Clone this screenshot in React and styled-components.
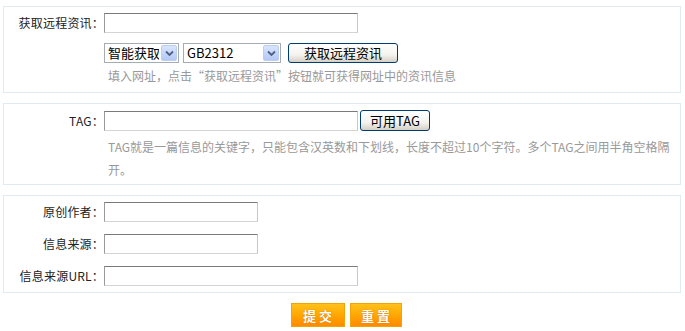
import React from 'react'
import styled, {createGlobalStyle} from 'styled-components'

const Global = createGlobalStyle`
  body {
    margin: 0;
    background: #fff;
    font-family: "Noto Sans CJK SC", "Liberation Sans", sans-serif;
    font-size: 12px;
    color: #333;
  }
`

const Page = styled.div`
  padding: 6px 4px 4px 3px;
`

const Panel = styled.div`
  border: 1px solid #e1eaee;
  padding: ${({pad}) => pad || '6px 0 6px 0'};
  margin-bottom: 10px;
  display: flex;
  flex-direction: column;
  gap: ${({gap}) => gap || '10px'};
`

const Row = styled.div`
  display: flex;
  align-items: center;
`

const Label = styled.div`
  width: 100px;
  flex: none;
  text-align: right;
  line-height: 20px;
  color: #222;
  letter-spacing: 0.2px;
`

const Field = styled.div`
  display: flex;
  align-items: center;
  gap: ${({gap}) => gap || '5px'};
  min-width: 0;
`

const Input = styled.input`
  box-sizing: border-box;
  width: ${({w}) => w}px;
  height: 20px;
  margin: 0;
  padding: 0 3px;
  border: 1px solid;
  border-color: #7a7a7a #c8c8c8 #d4d4d4 #9a9a9a;
  background: #fff;
  font: inherit;
  outline: none;
`

const SelectBox = styled.div`
  box-sizing: border-box;
  width: ${({w}) => w}px;
  height: 20px;
  display: flex;
  align-items: stretch;
  border: 1px solid #a5acb2;
  background: #fff;
  padding: 1px;
`

const NativeSelect = styled.select`
  appearance: none;
  -webkit-appearance: none;
  flex: 1;
  min-width: 0;
  border: none;
  outline: none;
  background: transparent;
  font: inherit;
  font-size: 13px;
  color: #000;
  padding: 0 2px;
  margin: 0;
  line-height: 16px;
`

const ArrowBox = styled.span`
  width: 16px;
  flex: none;
  display: flex;
  align-items: center;
  justify-content: center;
  border: 1px solid #bccdf3;
  border-radius: 2px;
  background: linear-gradient(#d9e5fd, #b3c8f5);
  box-sizing: border-box;
`

const XPButton = styled.button`
  box-sizing: border-box;
  height: ${({h}) => h || 20}px;
  padding: 0 ${({px}) => px || 14}px;
  margin: 0 0 0 ${({ml}) => ml || 0}px;
  border: 1px solid #003c74;
  border-radius: 3px;
  background: linear-gradient(#ffffff 0%, #f4f3ee 60%, #d6d0c5 100%);
  font: inherit;
  font-size: 13px;
  color: #000;
  line-height: 16px;
  cursor: pointer;
`

const Hint = styled.div`
  color: #999;
  line-height: ${({lh}) => lh || 20}px;
  margin-top: ${({mt}) => mt || 0}px;
  padding-left: 104px;
  padding-right: 6px;
`

const Actions = styled.div`
  display: flex;
  justify-content: center;
  gap: 5px;
  padding-left: 8px;
  margin-top: 1px;
`

const OrangeButton = styled.button`
  box-sizing: border-box;
  width: ${({w}) => w}px;
  height: 24px;
  border: 1px solid #f5a300;
  background: linear-gradient(#ffc21a 0%, #ffa400 55%, #ff8a00 100%);
  color: #fff;
  font: inherit;
  font-size: 13px;
  font-weight: bold;
  letter-spacing: 3px;
  text-indent: 3px;
  text-shadow: 0 0 1px #b35a00;
  margin: 0;
  cursor: pointer;
`

const Chevron = () => (
  <svg width="9" height="7" viewBox="0 0 9 7">
    <path d="M1 1.5 L4.5 5 L8 1.5" fill="none" stroke="#4d6185" strokeWidth="1.8" />
  </svg>
)

const Select = ({w, options}) => (
  <SelectBox w={w}>
    <NativeSelect>
      {options.map(o => <option key={o}>{o}</option>)}
    </NativeSelect>
    <ArrowBox><Chevron /></ArrowBox>
  </SelectBox>
)

function App() {
  return (
    <Page>
      <Global />
      <Panel pad="6px 0 6px 0" gap="10px">
        <Row>
          <Label>获取远程资讯：</Label>
          <Input w={254} />
        </Row>
        <div>
          <Row>
            <Label />
            <Field gap="4px">
              <Select w={75} options={['智能获取']} />
              <Select w={98} options={['GB2312', 'UTF-8', 'BIG5']} />
              <XPButton px={15} ml={3}>获取远程资讯</XPButton>
            </Field>
          </Row>
          <Hint mt={3}>填入网址，点击“获取远程资讯”按钮就可获得网址中的资讯信息</Hint>
        </div>
      </Panel>

      <Panel pad="6px 0 3px 0" gap="4px">
        <Row>
          <Label>TAG：</Label>
          <Field gap="2px">
            <Input w={254} />
            <XPButton h={21} px={9}>可用TAG</XPButton>
          </Field>
        </Row>
        <Hint lh={23}>
          TAG就是一篇信息的关键字，只能包含汉英数和下划线，长度不超过10个字符。多个TAG之间用半角空格隔开。
        </Hint>
      </Panel>

      <Panel pad="6px 0 6px 0" gap="12px">
        <Row>
          <Label>原创作者：</Label>
          <Input w={154} />
        </Row>
        <Row>
          <Label>信息来源：</Label>
          <Input w={154} />
        </Row>
        <Row>
          <Label>信息来源URL：</Label>
          <Input w={254} />
        </Row>
      </Panel>

      <Actions>
        <OrangeButton w={54}>提交</OrangeButton>
        <OrangeButton w={52}>重置</OrangeButton>
      </Actions>
    </Page>
  )
}

export default App
